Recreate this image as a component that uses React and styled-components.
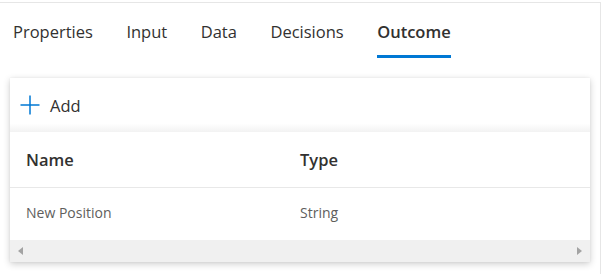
import React, { useState } from 'react';
import styled, { createGlobalStyle } from 'styled-components';

const GlobalStyle = createGlobalStyle`
  html, body {
    margin: 0;
    padding: 0;
    background: #fff;
  }
  body {
    font-family: 'Segoe UI', 'Open Sans', sans-serif;
    color: #323130;
  }
`;

const Panel = styled.div`
  box-sizing: border-box;
  width: 601px;
  margin-top: 2px;
  padding: 17px 10px 12px 0;
  border-top: 1px solid #e6e6e6;
  border-right: 1px solid #e6e6e6;
`;

const TabBar = styled.div`
  display: flex;
  gap: 33.5px;
  padding-left: 13px;
`;

const Tab = styled.button`
  font-family: inherit;
  font-size: 16.5px;
  line-height: 24px;
  font-weight: ${(p) => (p.$active ? 600 : 400)};
  color: #323130;
  background: none;
  border: none;
  padding: 0 0 11px;
  margin: 0;
  border-bottom: 3px solid ${(p) => (p.$active ? '#0078d4' : 'transparent')};
  cursor: pointer;
`;

const Card = styled.div`
  margin: 20px 0 0 10px;
  width: 580px;
  background: #fff;
  box-shadow: 0 2px 7px rgba(0, 0, 0, 0.2), 0 0 2px rgba(0, 0, 0, 0.06);
`;

const Toolbar = styled.div`
  height: 54px;
  display: flex;
  align-items: center;
  gap: 10px;
  padding-left: 10px;
  background: linear-gradient(to bottom, #fff 84%, #f2f2f2 100%);
`;

const AddButton = styled.button`
  display: flex;
  align-items: center;
  gap: 10px;
  font-family: inherit;
  font-size: 16.5px;
  color: #323130;
  background: none;
  border: none;
  padding: 0;
  cursor: pointer;
`;

const Row = styled.div`
  box-sizing: border-box;
  display: grid;
  grid-template-columns: 274px 1fr;
  align-items: center;
  height: ${(p) => (p.$header ? 56 : 52)}px;
  padding: 0 0 ${(p) => (p.$header ? 0 : 4)}px 16px;
  border-bottom: ${(p) => (p.$header ? '1px solid #e8e8e8' : 'none')};
  font-size: ${(p) => (p.$header ? '16.5px' : '14px')};
  font-weight: ${(p) => (p.$header ? 600 : 400)};
  color: ${(p) => (p.$header ? '#323130' : '#605e5c')};
`;

const ScrollBar = styled.div`
  height: 22px;
  background: #f0f0f0;
  display: flex;
  align-items: center;
  justify-content: space-between;
  padding: 0 8px;
`;

const Arrow = styled.span`
  width: 0;
  height: 0;
  border-top: 4.5px solid transparent;
  border-bottom: 4.5px solid transparent;
  ${(p) =>
    p.$dir === 'left'
      ? 'border-right: 5px solid #a3a3a3;'
      : 'border-left: 5px solid #a3a3a3;'}
`;

const PlusIcon = () => (
  <svg width="20" height="20" viewBox="0 0 20 20">
    <path d="M10 0.5v19M0.5 10h19" stroke="#0078d4" strokeWidth="1.5" fill="none" />
  </svg>
);

const tabs = ['Properties', 'Input', 'Data', 'Decisions', 'Outcome'];

export default function App() {
  const [active, setActive] = useState('Outcome');
  return (
    <>
      <GlobalStyle />
      <Panel>
        <TabBar>
          {tabs.map((t) => (
            <Tab key={t} $active={t === active} onClick={() => setActive(t)}>
              {t}
            </Tab>
          ))}
        </TabBar>
        <Card>
          <Toolbar>
            <AddButton>
              <PlusIcon />
              Add
            </AddButton>
          </Toolbar>
          <Row $header>
            <span>Name</span>
            <span>Type</span>
          </Row>
          <Row>
            <span>New Position</span>
            <span>String</span>
          </Row>
          <ScrollBar>
            <Arrow $dir="left" />
            <Arrow $dir="right" />
          </ScrollBar>
        </Card>
      </Panel>
    </>
  );
}
